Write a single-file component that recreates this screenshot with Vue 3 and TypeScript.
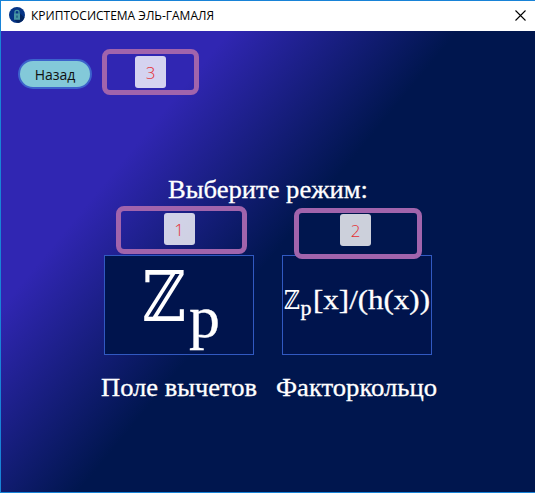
<script setup lang="ts">
interface Callout {
  id: number
  kind: string
}

const callouts: Callout[] = [
  { id: 1, kind: 'field' },
  { id: 2, kind: 'ring' },
  { id: 3, kind: 'back' },
]
</script>

<template>
  <div class="window">
    <header class="titlebar">
      <svg class="logo" viewBox="0 0 16 16">
        <circle cx="8" cy="8" r="8" fill="#063485" />
        <path d="M10.5 6 L15.4 10.5 A8 8 0 0 1 9 15.9 L5 12.5 Z" fill="#03245f" />
        <path d="M6 7 V5 Q6 3.4 8 3.4 Q10 3.4 10 5 V7" fill="none" stroke="#4795a3" stroke-width="1.3" />
        <rect x="5" y="6.5" width="6" height="6.3" fill="#4795a3" />
        <rect x="7.4" y="8.5" width="1.2" height="2.3" fill="#17527f" />
      </svg>
      <svg class="title" width="184" height="20">
        <text x="0" y="14.5" textLength="183" lengthAdjust="spacingAndGlyphs">КРИПТОСИСТЕМА ЭЛЬ-ГАМАЛЯ</text>
      </svg>
      <svg class="close" viewBox="0 0 11 11">
        <path d="M.5 .5 L10.5 10.5 M10.5 .5 L.5 10.5" stroke="#000" stroke-width="1.1" />
      </svg>
    </header>

    <main class="client">
      <button class="back">Назад</button>

      <section class="chooser">
        <svg class="heading" width="202" height="32">
          <text x="1" y="24" textLength="200" lengthAdjust="spacingAndGlyphs">Выберите режим:</text>
        </svg>

        <div class="modes">
          <div class="mode">
            <div class="tile">
              <svg width="148" height="98">
                <text class="double" x="37" y="65" font-size="70" textLength="44" lengthAdjust="spacingAndGlyphs">ℤ</text>
                <text class="roman" x="84" y="81" font-size="60" textLength="31" lengthAdjust="spacingAndGlyphs">p</text>
              </svg>
            </div>
            <svg class="caption" width="160" height="34">
              <text x="2" y="24" textLength="156" lengthAdjust="spacingAndGlyphs">Поле вычетов</text>
            </svg>
          </div>
          <div class="mode">
            <div class="tile">
              <svg width="148" height="98">
                <text class="double" x="1" y="53" font-size="26" textLength="16" lengthAdjust="spacingAndGlyphs">ℤ</text>
                <text class="roman" x="17.5" y="58.5" font-size="20" textLength="11" lengthAdjust="spacingAndGlyphs">p</text>
                <text class="roman" x="30" y="53" font-size="27" textLength="117" lengthAdjust="spacingAndGlyphs">[x]/(h(x))</text>
              </svg>
            </div>
            <svg class="caption" width="166" height="34">
              <text x="2" y="24" textLength="161" lengthAdjust="spacingAndGlyphs">Факторкольцо</text>
            </svg>
          </div>
        </div>
      </section>
    </main>

    <div v-for="c in callouts" :key="c.id" class="callout" :class="c.kind">
      <span class="number">{{ c.id }}</span>
    </div>
  </div>
</template>

<style>
body {
  margin: 0;
}
</style>

<style scoped>
.window {
  position: relative;
  box-sizing: border-box;
  width: 535px;
  height: 493px;
  display: flex;
  flex-direction: column;
  border: solid #1883d7;
  border-width: 1px 0 1px 1px;
  overflow: hidden;
}
svg {
  display: block;
  overflow: visible;
  flex: none;
}
.titlebar {
  height: 30px;
  flex: none;
  display: flex;
  align-items: center;
  box-sizing: border-box;
  padding: 0 9px 2px 8px;
  background: #fff;
}
.logo {
  width: 16px;
  height: 16px;
}
.title {
  margin-left: 6px;
  font: 12px "Open Sans", "Noto Sans", sans-serif;
  fill: #000;
}
.close {
  width: 11px;
  height: 11px;
  margin-left: auto;
}
.client {
  flex: 1;
  display: flex;
  flex-direction: column;
  align-items: flex-start;
  background: linear-gradient(129.5deg, #3026b2 25%, #00164e 50%);
}
.back {
  box-sizing: border-box;
  width: 74px;
  height: 30px;
  margin: 28px 0 0 17px;
  padding: 1px 0 0;
  border: 2px solid #3c62cc;
  border-radius: 15px;
  background: #83c9d9;
  color: #111;
  font: 14px "Open Sans", "Noto Sans", sans-serif;
}
.chooser {
  width: 534px;
  display: flex;
  flex-direction: column;
  align-items: center;
  padding-top: 85px;
}
.heading,
.caption {
  font: 25px "Liberation Serif", serif;
  fill: #fff;
  stroke: #fff;
  stroke-width: 0.3px;
}
.modes {
  display: flex;
  gap: 28px;
  margin-top: 49px;
}
.mode {
  width: 150px;
  display: flex;
  flex-direction: column;
  align-items: center;
  gap: 17px;
}
.tile {
  box-sizing: border-box;
  width: 150px;
  height: 100px;
  border: 1px solid #3159c1;
  background: #00144d;
  fill: #fff;
}
.double {
  font-family: "DejaVu Serif", serif;
}
.roman {
  font-family: "Liberation Serif", serif;
  stroke: #fff;
  stroke-width: 0.3px;
}
.callout {
  position: absolute;
  box-sizing: border-box;
  display: flex;
  justify-content: center;
  border: 5px solid #a164ac;
  border-radius: 8px;
}
.number {
  width: 31px;
  height: 32px;
  border-radius: 3px;
  background: rgba(255, 255, 255, 0.8);
  color: #e52e32;
  font: 300 17px/33px "Open Sans", sans-serif;
  text-align: center;
}
.back.callout {
  left: 101px;
  top: 48px;
  width: 97px;
  height: 46px;
  margin: 0;
  padding: 2px 0 0;
  border: 5px solid #a164ac;
  border-radius: 8px;
  background: none;
}
.field {
  left: 115px;
  top: 205px;
  width: 131px;
  height: 48px;
  padding: 2px 5px 0 0;
}
.ring {
  left: 293px;
  top: 207px;
  width: 128px;
  height: 51px;
  padding: 1px 5px 0 0;
}
</style>
